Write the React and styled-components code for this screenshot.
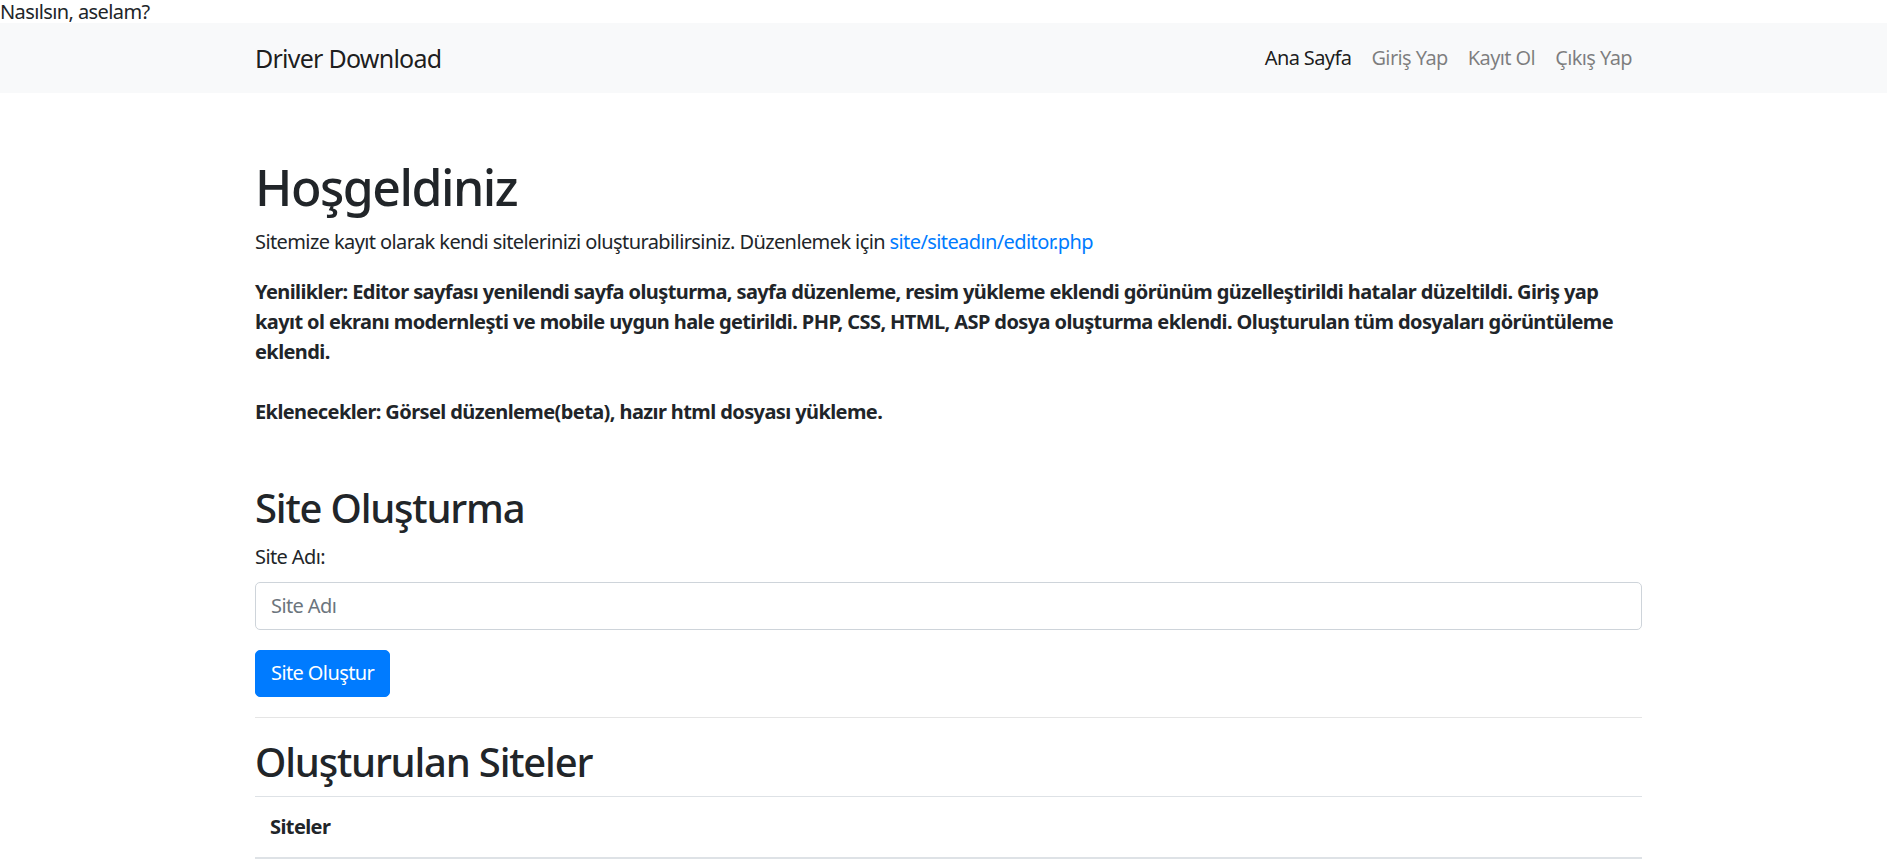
import React from 'react';
import styled, { createGlobalStyle } from 'styled-components';

const GlobalStyle = createGlobalStyle`
  body {
    margin: 0;
    font-family: "Noto Sans", "Open Sans", sans-serif;
    font-size: 20px;
    line-height: 1.5;
    color: #212529;
    background: #fff;
  }
  * {
    box-sizing: border-box;
    letter-spacing: -0.03em;
  }
`;

const Greeting = styled.div`
  line-height: 23px;
  height: 23px;
`;

const Navbar = styled.nav`
  background: #f8f9fa;
  height: 70px;
`;

const Container = styled.div`
  margin: 0 245px 0 255px;
`;

const NavInner = styled(Container)`
  height: 100%;
  display: flex;
  align-items: center;
  justify-content: space-between;
`;

const Brand = styled.a`
  font-size: 25px;
  padding-top: 2px;
  color: rgba(0, 0, 0, 0.9);
  text-decoration: none;
`;

const NavList = styled.ul`
  display: flex;
  margin: 0;
  padding: 0;
  list-style: none;
`;

const NavLink = styled.a`
  display: block;
  padding: 0 10px;
  color: ${(p) => (p.$active ? 'rgba(0, 0, 0, 0.9)' : 'rgba(0, 0, 0, 0.5)')};
  text-decoration: none;
`;

const Main = styled(Container)`
  padding-top: 64px;
`;

const Title = styled.h1`
  margin: 0 0 10px;
  font-size: 50px;
  font-weight: 500;
  line-height: 1.2;
`;

const Text = styled.p`
  margin: 0 0 20px;
  font-weight: ${(p) => (p.$bold ? 700 : 400)};
  white-space: ${(p) => (p.$bold ? 'nowrap' : 'normal')};
`;

const Link = styled.a`
  color: #007bff;
  text-decoration: none;
`;

const SectionTitle = styled.h2`
  margin: ${(p) => (p.$spaced ? '57px' : '0')} 0 10px;
  font-size: 40px;
  font-weight: 500;
  line-height: 1.2;
`;

const Label = styled.label`
  display: inline-block;
  margin-bottom: 10px;
`;

const FormGroup = styled.div`
  margin-bottom: 20px;
`;

const Input = styled.input`
  display: block;
  width: 100%;
  height: 47.5px;
  padding: 7.5px 15px;
  font: inherit;
  color: #495057;
  background: #fff;
  border: 1px solid #ced4da;
  border-radius: 5px;
  &::placeholder { color: #6c757d; }
`;

const Button = styled.button`
  display: inline-block;
  height: 47.5px;
  padding: 7.5px 15px;
  font: inherit;
  color: #fff;
  background: #007bff;
  border: 1px solid #007bff;
  border-radius: 5px;
`;

const Divider = styled.hr`
  margin: 20px 0;
  border: 0;
  border-top: 1px solid rgba(0, 0, 0, 0.1);
`;

const Table = styled.table`
  width: 100%;
  border-collapse: collapse;
`;

const Th = styled.th`
  text-align: left;
  padding: 15px;
  font-weight: 700;
  border-top: 1px solid #dee2e6;
  border-bottom: 2px solid #dee2e6;
`;

function App() {
  return (
    <>
      <GlobalStyle />
      <Greeting>Nasılsın, aselam?</Greeting>
      <Navbar>
        <NavInner>
          <Brand href="#">Driver Download</Brand>
          <NavList>
            <li><NavLink $active href="#">Ana Sayfa</NavLink></li>
            <li><NavLink href="#">Giriş Yap</NavLink></li>
            <li><NavLink href="#">Kayıt Ol</NavLink></li>
            <li><NavLink href="#">Çıkış Yap</NavLink></li>
          </NavList>
        </NavInner>
      </Navbar>
      <Main>
        <Title>Hoşgeldiniz</Title>
        <Text>
          Sitemize kayıt olarak kendi sitelerinizi oluşturabilirsiniz. Düzenlemek için{' '}
          <Link href="#">site/siteadın/editor.php</Link>
        </Text>
        <Text $bold>
          Yenilikler: Editor sayfası yenilendi sayfa oluşturma, sayfa düzenleme, resim yükleme eklendi görünüm güzelleştirildi hatalar düzeltildi. Giriş yap
          <br />
          kayıt ol ekranı modernleşti ve mobile uygun hale getirildi. PHP, CSS, HTML, ASP dosya oluşturma eklendi. Oluşturulan tüm dosyaları görüntüleme
          <br />
          eklendi.
          <br />
          <br />
          Eklenecekler: Görsel düzenleme(beta), hazır html dosyası yükleme.
        </Text>
        <SectionTitle $spaced>Site Oluşturma</SectionTitle>
        <form>
          <FormGroup>
            <Label>Site Adı:</Label>
            <Input type="text" placeholder="Site Adı" />
          </FormGroup>
          <Button type="button">Site Oluştur</Button>
        </form>
        <Divider />
        <SectionTitle>Oluşturulan Siteler</SectionTitle>
        <Table>
          <thead>
            <tr><Th>Siteler</Th></tr>
          </thead>
        </Table>
      </Main>
    </>
  );
}

export default App;
